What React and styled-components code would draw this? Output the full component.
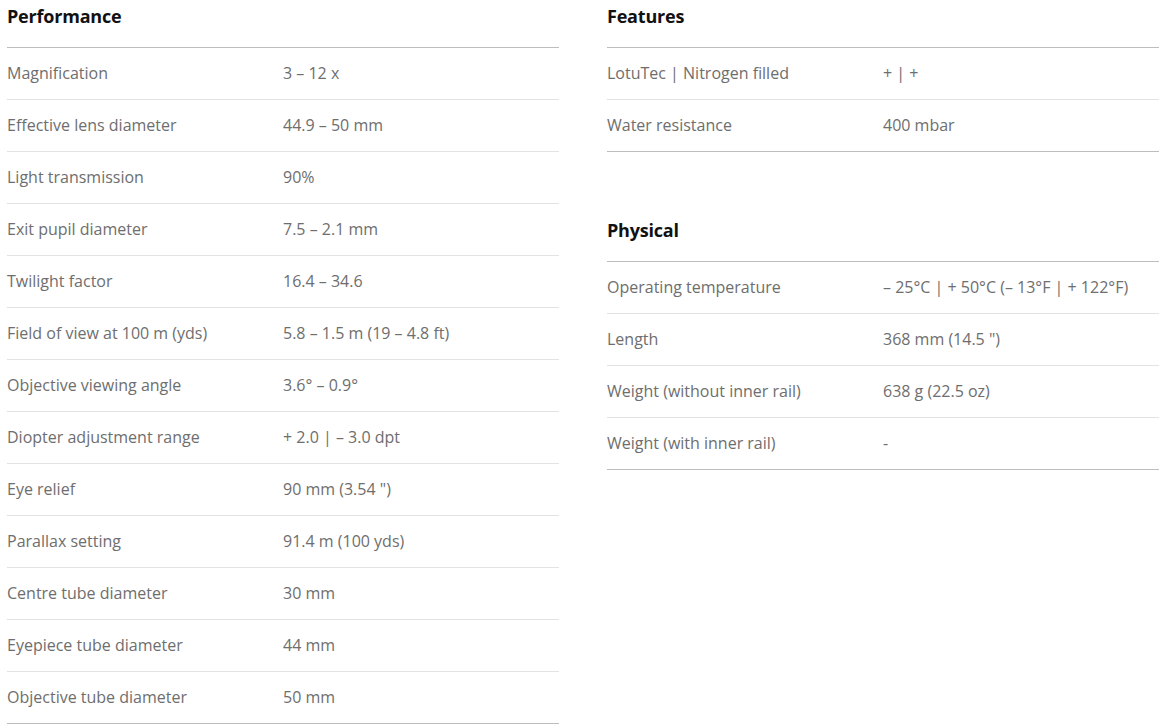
import React from "react";
import styled, { createGlobalStyle } from "styled-components";

const Global = createGlobalStyle`
  html, body { margin: 0; padding: 0; background: #fff; }
  body { font-family: "Open Sans", "Noto Sans", sans-serif; }
`;

const Page = styled.div`
  display: grid;
  grid-template-columns: 552px 552px;
  column-gap: 48px;
  padding: 0 9px 0 7px;
  align-items: start;
`;

const Column = styled.div`
  display: flex;
  flex-direction: column;
  gap: 62px;
`;

const Section = styled.section`
  display: flex;
  flex-direction: column;
`;

const Heading = styled.h2`
  margin: 0;
  height: 47px;
  border-bottom: 1px solid #bdbdbd;
  font-size: 18px;
  font-weight: 700;
  color: #111;
  line-height: 32px;
  letter-spacing: -0.2px;
`;

const Row = styled.div`
  display: grid;
  grid-template-columns: 276px 1fr;
  height: 51px;
  align-items: center;
  border-bottom: 1px solid ${(p) => (p.$last ? "#bdbdbd" : "#e3e3e3")};
  font-size: 16px;
  color: #6e6e6e;
`;

const Cell = styled.span`
  white-space: nowrap;
  margin-top: -1px;
`;

const performance = [
  ["Magnification", "3 – 12 x"],
  ["Effective lens diameter", "44.9 – 50 mm"],
  ["Light transmission", "90%"],
  ["Exit pupil diameter", "7.5 – 2.1 mm"],
  ["Twilight factor", "16.4 – 34.6"],
  ["Field of view at 100 m (yds)", "5.8 – 1.5 m (19 – 4.8 ft)"],
  ["Objective viewing angle", "3.6° – 0.9°"],
  ["Diopter adjustment range", "+ 2.0 | – 3.0 dpt"],
  ["Eye relief", "90 mm (3.54 \")"],
  ["Parallax setting", "91.4 m (100 yds)"],
  ["Centre tube diameter", "30 mm"],
  ["Eyepiece tube diameter", "44 mm"],
  ["Objective tube diameter", "50 mm"],
];

const features = [
  ["LotuTec | Nitrogen filled", "+ | +"],
  ["Water resistance", "400 mbar"],
];

const physical = [
  ["Operating temperature", "– 25°C | + 50°C (– 13°F | + 122°F)"],
  ["Length", "368 mm (14.5 \")"],
  ["Weight (without inner rail)", "638 g (22.5 oz)"],
  ["Weight (with inner rail)", "-"],
];

function SpecTable({ title, rows }) {
  return (
    <Section>
      <Heading>{title}</Heading>
      {rows.map(([k, v], i) => (
        <Row key={k} $last={i === rows.length - 1}>
          <Cell>{k}</Cell>
          <Cell>{v}</Cell>
        </Row>
      ))}
    </Section>
  );
}

export default function App() {
  return (
    <>
      <Global />
      <Page>
        <Column>
          <SpecTable title="Performance" rows={performance} />
        </Column>
        <Column>
          <SpecTable title="Features" rows={features} />
          <SpecTable title="Physical" rows={physical} />
        </Column>
      </Page>
    </>
  );
}
